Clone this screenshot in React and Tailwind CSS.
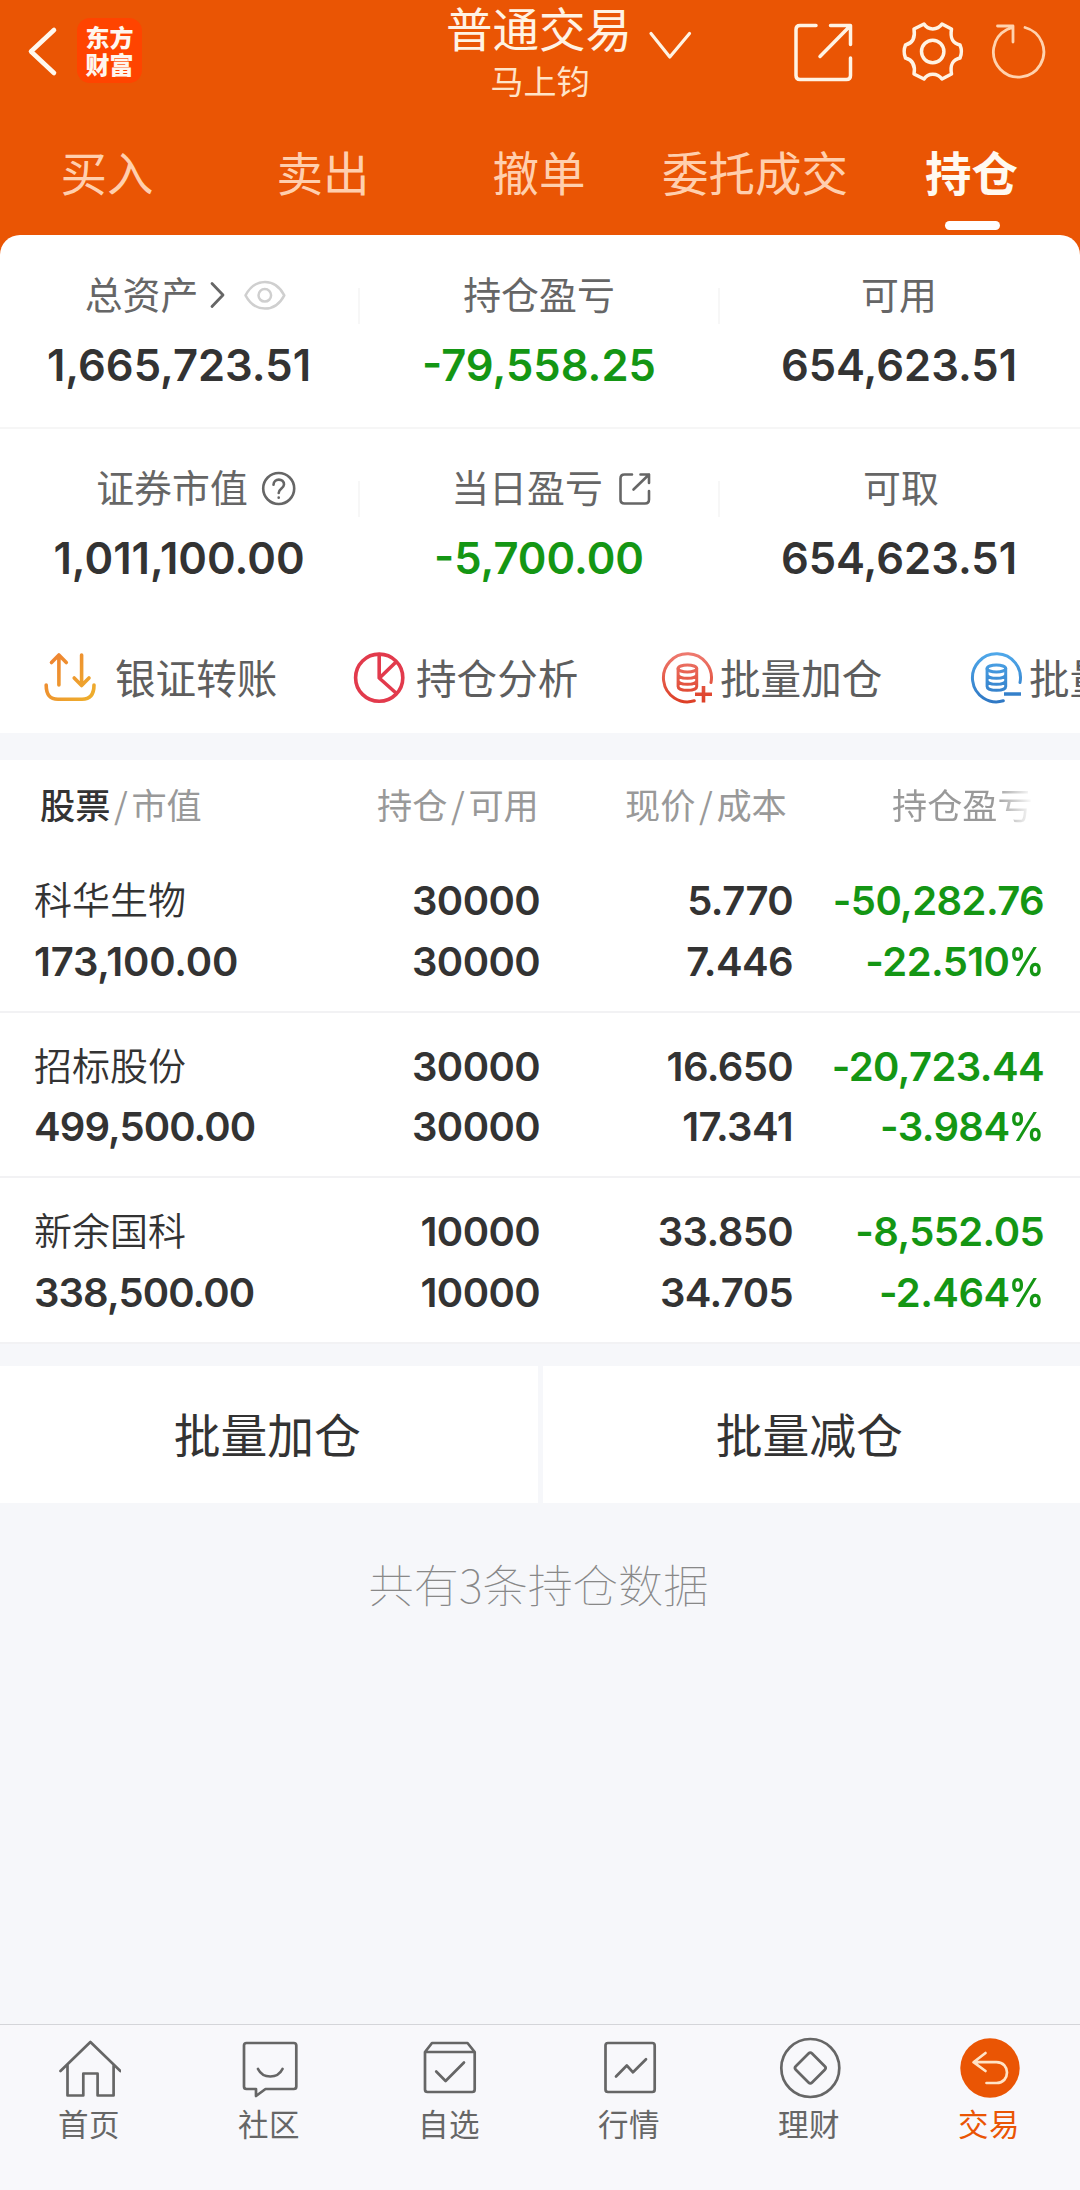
const CJK = 'font-["Noto_Sans_CJK_SC",sans-serif]';
const NUM = 'font-["Inter","Noto_Sans_CJK_SC",sans-serif] font-semibold';

function Icon({ box, children, className = "", stroke = "currentColor", width = 3 }) {
  const [, , w, h] = box;
  return (
    <svg
      width={w}
      height={h}
      viewBox={box.join(" ")}
      fill="none"
      stroke={stroke}
      strokeWidth={width}
      strokeLinecap="round"
      strokeLinejoin="round"
      className={"block shrink-0 " + className}
    >
      {children}
    </svg>
  );
}

function Header() {
  return (
    <header className="h-[264px] bg-[#ea5504] text-[#fff3e4]">
      <div className="grid h-[110px] grid-cols-[1fr_auto_1fr]">
        <div className="flex items-start pt-[18px] pl-[27px]">
          <Icon box={[27, 18, 32, 66]} width={4.6} stroke="#fff8ee">
            <path d="M54 30 31 51.500 54 73" />
          </Icon>
          <div className={"ml-[18px] flex h-[65px] w-[65px] flex-col items-center justify-center rounded-[13px] bg-[#ff4400] pb-[2px] text-[24px] leading-[27px] font-black text-[#fff6ee] " + CJK}>
            <span>东方</span>
            <span>财富</span>
          </div>
        </div>
        <div className={"w-[188px] text-center whitespace-nowrap " + CJK}>
          <div className="mr-[2px] h-[54px] text-[46.500px] leading-[53px]">普通交易</div>
          <div className="h-[50px] text-[33px] leading-[52px] text-[#ffe4c8]">马上钧</div>
        </div>
        <div className="flex items-start pt-[18px]">
          <Icon box={[634, 18, 60, 66]} width={3.2}>
            <path d="M651 33.500 669.800 57 689.500 33.500" />
          </Icon>
          <Icon box={[694, 18, 164, 66]} width={3.500}>
            <path d="M816 25.500H800q-4 0-4 4V75.500q0 4 4 4H846.500q4 0 4-4V58M830.500 25.500H850.500V44.500M850 26 820 56.500" />
          </Icon>
          <Icon box={[858, 18, 110, 66]} width={3.500}>
            <path d="M924 24C928 30.500 937.500 30.500 942 24L951.500 29C950 38 952 43 960 45Q962.800 51.500 960 58C952 60 950 65 951.500 74L942 79C937.500 72.500 928 72.500 924 79L914 74C915.500 65 913 60 905.500 58Q902.800 51.500 905.500 45C913 43 915.500 38 914 29Z" />
            <circle cx="932.700" cy="51.500" r="11.200" />
          </Icon>
          <Icon box={[968, 18, 84, 66]} width={2.800} stroke="#ffd2ae">
            <path d="M1025 27.500A25.200 25.200 0 1 1 1007 29.500L1012.500 27.500M997.500 26H1013V42" />
          </Icon>
        </div>
      </div>
      <nav className={"grid h-[124px] grid-cols-5 text-[46.500px] leading-[54px] text-[#ffcfae] " + CJK}>
        {["买入", "卖出", "撤单", "委托成交", "持仓"].map((t) => (
          <div key={t} className="flex flex-col items-center pt-[34px] whitespace-nowrap">
            {t === "持仓" ? (
              <>
                <span className="mr-px font-bold text-[#fff9f0]">{t}</span>
                <span className="mt-[23px] h-[9px] w-[55px] rounded-full bg-white" />
              </>
            ) : (
              <span className="mr-[2px]">{t}</span>
            )}
          </div>
        ))}
      </nav>
    </header>
  );
}

const EyeIcon = () => (
  <Icon box={[243, 279, 44, 33]} width={2.500} stroke="#cfcfcf">
    <path d="M245.500 295.300C255 277.500 275 277.500 284.300 295.300C275 313 255 313 245.500 295.300Z" />
    <circle cx="264.800" cy="295.300" r="6.300" />
  </Icon>
);

const HelpIcon = () => (
  <Icon box={[261, 471, 36, 37]} width={2.600} stroke="#666">
    <circle cx="278.700" cy="489.500" r="15.500" />
    <path d="M273.500 485.800C273.500 478.800 284.200 479 284 485.500C283.800 489.500 278.700 489.500 278.700 494M278.700 498.500v.2" />
  </Icon>
);

const OpenIcon = () => (
  <Icon box={[617, 472, 35, 35]} width={2.600} stroke="#666">
    <path d="M631 475.500H623.500q-4 0-4 4V500.500q0 4 4 4H644q4 0 4-4V492M639.500 475.500H648V484M648 475.500 632.500 490.500" />
  </Icon>
);

function Stat({ label, value, green, icons, divider }) {
  return (
    <div className="relative flex flex-col items-center">
      <div className={"mr-[2px] flex h-[44px] items-center text-[37.900px] leading-[44px] whitespace-nowrap text-[#666] " + CJK}>
        <span className="-mt-[4px]">{label}</span>
        {icons}
      </div>
      <div className={"mt-[20px] mr-[2px] text-[43.500px] leading-[56px] " + NUM + (green ? " text-[#149614]" : " text-[#333]")}>{value}</div>
      {divider && <span className="absolute top-[15px] right-0 h-[36px] w-[2px] bg-[#f7f7f7]" />}
    </div>
  );
}

function Summary() {
  return (
    <section className="-mt-[29px] h-[498px] overflow-hidden rounded-t-[20px] bg-white">
      <div className="grid h-[194px] grid-cols-3 border-b-2 border-[#f6f6f6] pt-[38px]">
        <Stat
          divider
          label="总资产"
          value="1,665,723.51"
          icons={
            <>
              <Icon box={[209, 279, 17, 32]} className="ml-[11px]" width={2.800} stroke="#666">
                <path d="M212 283.500 223 295 212 306.500" />
              </Icon>
              <span className="ml-[17px] -mr-[14px]"><EyeIcon /></span>
            </>
          }
        />
        <Stat divider label="持仓盈亏" value="-79,558.25" green />
        <Stat label="可用" value="654,623.51" />
      </div>
      <div className="grid h-[190px] grid-cols-3 pt-[37px]">
        <Stat divider label="证券市值" value="1,011,100.00" icons={<span className="ml-[13px] -mr-[35px]"><HelpIcon /></span>} />
        <Stat divider label="当日盈亏" value="-5,700.00" green icons={<span className="ml-[15px] -mr-[26px]"><OpenIcon /></span>} />
        <div className="pl-[4px]"><Stat label="可取" value={<span className="-ml-[4px]">654,623.51</span>} /></div>
      </div>
      <Actions />
    </section>
  );
}

const Coins = () => (
  <>
    <path d="M711 682.500A24 24 0 1 0 694.300 700.800" />
    <ellipse cx="687.400" cy="668.500" rx="9.300" ry="3.500" />
    <path d="M678.100 668.500V686.500C678.100 691.500 696.700 691.500 696.700 686.500V668.500M678.100 674.500C678.100 679.500 696.700 679.500 696.700 674.500M678.100 680.500C678.100 685.500 696.700 685.500 696.700 680.500" />
  </>
);

function Actions() {
  return (
    <div className={"flex h-[114px] pt-[30px] text-[40.600px] leading-[56px] whitespace-nowrap text-[#5e5e5e] " + CJK}>
      <div className="flex w-[352px] shrink-0 pl-[43px]">
        <Icon box={[43, 649, 55, 56]} width={3.600} stroke="url(#transfer)">
          <defs>
            <linearGradient id="transfer" gradientUnits="userSpaceOnUse" x1="46" y1="653" x2="94" y2="700">
              <stop stopColor="#ee7f32" />
              <stop offset="1" stopColor="#eeb02c" />
            </linearGradient>
          </defs>
          <path d="M58.900 685V655M51.500 662.500 58.900 655 66.300 662.500M81.600 655V685M74.200 678 81.600 685.500 89 678M46.200 685C46.200 695 50 699.300 58 699.300H82C90 699.300 94 695 94 685" />
        </Icon>
        <span className="ml-[17px]">银证转账</span>
      </div>
      <div className="flex w-[308px] shrink-0">
        <Icon box={[352, 649, 55, 56]} width={3.600} stroke="#e23a4c">
          <circle cx="379.200" cy="677.700" r="23.600" />
          <path d="M379.200 654.500V678L396 693M379.500 678 395.500 662.500" />
        </Icon>
        <span className="ml-[9px]">持仓分析</span>
      </div>
      <div className="flex w-[309px] shrink-0">
        <Icon box={[660, 649, 55, 56]} width={3} stroke="url(#add)">
          <defs>
            <linearGradient id="add" gradientUnits="userSpaceOnUse" x1="687" y1="653" x2="687" y2="702">
              <stop stopColor="#ee7a70" />
              <stop offset="1" stopColor="#dd3f26" />
            </linearGradient>
          </defs>
          <Coins />
          <path strokeWidth="3.600" strokeLinecap="butt" d="M695 694.300H712M703.500 686V702.500" />
        </Icon>
        <span className="ml-[5px]">批量加仓</span>
      </div>
      <div className="flex shrink-0">
        <Icon box={[660, 649, 55, 56]} width={3} stroke="url(#reduce)">
          <defs>
            <linearGradient id="reduce" gradientUnits="userSpaceOnUse" x1="687" y1="653" x2="687" y2="702">
              <stop stopColor="#4fa8ea" />
              <stop offset="1" stopColor="#2f78c4" />
            </linearGradient>
          </defs>
          <Coins />
          <path strokeWidth="3.600" strokeLinecap="butt" d="M695 694.010 712 694" />
        </Icon>
        <span className="ml-[5px]">批量减仓</span>
      </div>
    </div>
  );
}

const rows = [
  ["科华生物", "173,100.00", "30000", "30000", "5.770", "7.446", "-50,282.76", "-22.510"],
  ["招标股份", "499,500.00", "30000", "30000", "16.650", "17.341", "-20,723.44", "-3.984"],
  ["新余国科", "338,500.00", "10000", "10000", "33.850", "34.705", "-8,552.05", "-2.464"],
];

const Pair = ({ a, b, strong }) => (
  <div className="flex whitespace-nowrap">
    <span className={strong ? "font-medium text-[#333]" : ""}>{a}</span>
    <span className="w-[21px] text-center">/</span>
    <span>{b}</span>
  </div>
);

function Holdings() {
  return (
    <section className="mt-[27px] bg-white">
      <div className={"flex h-[87px] pt-[19px] text-[35.200px] leading-[50px] text-[#999] " + CJK}>
        <div className="w-[337px] pl-[40px]"><Pair a="股票" b="市值" strong /></div>
        <div className="w-[248px] pl-[40px]"><Pair a="持仓" b="可用" /></div>
        <div className="w-[267px] pl-[40px]"><Pair a="现价" b="成本" /></div>
        <div className="w-[190px] pl-[40px] whitespace-nowrap">
          <span className="bg-linear-to-r from-[#999] from-72% to-white bg-clip-text text-transparent">持仓盈亏</span>
        </div>
      </div>
      {rows.map(([name, mv, qty, avail, price, cost, pl, pct]) => (
        <div
          key={name}
          className={"grid h-[165.700px] grid-cols-[289px_217px_253px_251px] content-start border-b-2 border-[#f2f2f4] pt-[24px] pl-[34px] text-right text-[40px] leading-[60.800px] tracking-[-0.600px] text-[#333] " + NUM}
        >
          <span className={"-mt-[3px] text-left text-[38px] font-[350] tracking-normal " + CJK}>{name}</span>
          <span>{qty}</span>
          <span>{price}</span>
          <span className="text-[#149614]">{pl}</span>
          <span className={name === "科华生物" ? "text-left tracking-[-0.200px]" : "text-left tracking-[-0.900px]"}>{mv}</span>
          <span>{avail}</span>
          <span>{cost}</span>
          <span className="text-[#149614]">
            {pct}
            <span className="-ml-[5px] inline-block origin-right scale-x-[0.880]">%</span>
          </span>
        </div>
      ))}
    </section>
  );
}

const tabs = [
  ["首页", [59, 2036, 62, 64], <path d="M60.500 2071 90.400 2042 120.400 2071M67.500 2065V2095.500H83.300V2073.500H97.600V2095.500H113.600V2065" />],
  ["社区", [239, 2036, 62, 64], <path d="M246.500 2043H293.800q2.500 0 2.500 2.500V2086.500q0 2.500-2.500 2.500H265.500L256 2096V2089H246.500q-2.500 0-2.500-2.500V2045.500q0-2.500 2.500-2.500ZM258 2069C263 2079 277.500 2079 282.500 2069" />],
  ["自选", [419, 2036, 62, 64], <path d="M425 2052 432 2043H467.500L474.700 2052V2089.500q0 2.500-2.500 2.500H427.500q-2.500 0-2.500-2.500ZM425 2052H474.700M436.200 2071.500 445.600 2081 464 2062.500" />],
  ["行情", [599, 2036, 62, 64], <path d="M608 2043H652.200q2.500 0 2.500 2.500V2089.500q0 2.500-2.500 2.500H608q-2.500 0-2.500-2.500V2045.500q0-2.500 2.500-2.500ZM616 2076.500 626.800 2065.500 633 2072.300 646 2059.300" />],
  ["理财", [779, 2036, 62, 64], <><circle cx="810.300" cy="2068" r="29" /><rect x="798.800" y="2056.500" width="23" height="23" rx="2.500" transform="rotate(45 810.300 2068)" /></>],
  ["交易", [959, 2036, 62, 64], <><circle cx="990" cy="2068" r="29.700" fill="#ea5504" stroke="none" /><path stroke="#ffe3c6" d="M985.500 2053 973.500 2062.200 985.500 2071M974 2062.200H996.500C1010.500 2062.200 1010.500 2083 996.500 2083H986.500" /></>],
];

function BottomBar() {
  return (
    <nav className={"mt-auto grid h-[166px] grid-cols-6 border-t border-[#d4d5d9] bg-[#f8f8fb] pt-[11px] text-[30.500px] leading-[44px] text-[#666] " + CJK}>
      {tabs.map(([t, box, art], i) => (
        <div key={t} className={"flex flex-col items-center " + (i === 5 ? "text-[#ea5504]" : "")}>
          <Icon box={box} width={2.700}>{art}</Icon>
          <span className="mt-[1px] mr-[2px] tracking-[0.500px]">{t}</span>
        </div>
      ))}
    </nav>
  );
}

export default function App() {
  return (
    <div className="flex h-[2190px] w-[1080px] flex-col overflow-hidden bg-[#f6f7fa]">
      <Header />
      <Summary />
      <Holdings />
      <div className={"mt-[22px] grid h-[137px] grid-cols-2 gap-[5px] text-center text-[46.800px] leading-[134px] text-[#333] " + CJK}>
        <div className="bg-white pr-[3px]">批量加仓</div>
        <div className="bg-white pr-[4px]">批量减仓</div>
      </div>
      <div className={"mt-[49px] mr-[3px] text-center text-[45.200px] leading-[64px] font-thin text-[#888] " + CJK}>共有3条持仓数据</div>
      <BottomBar />
    </div>
  );
}
